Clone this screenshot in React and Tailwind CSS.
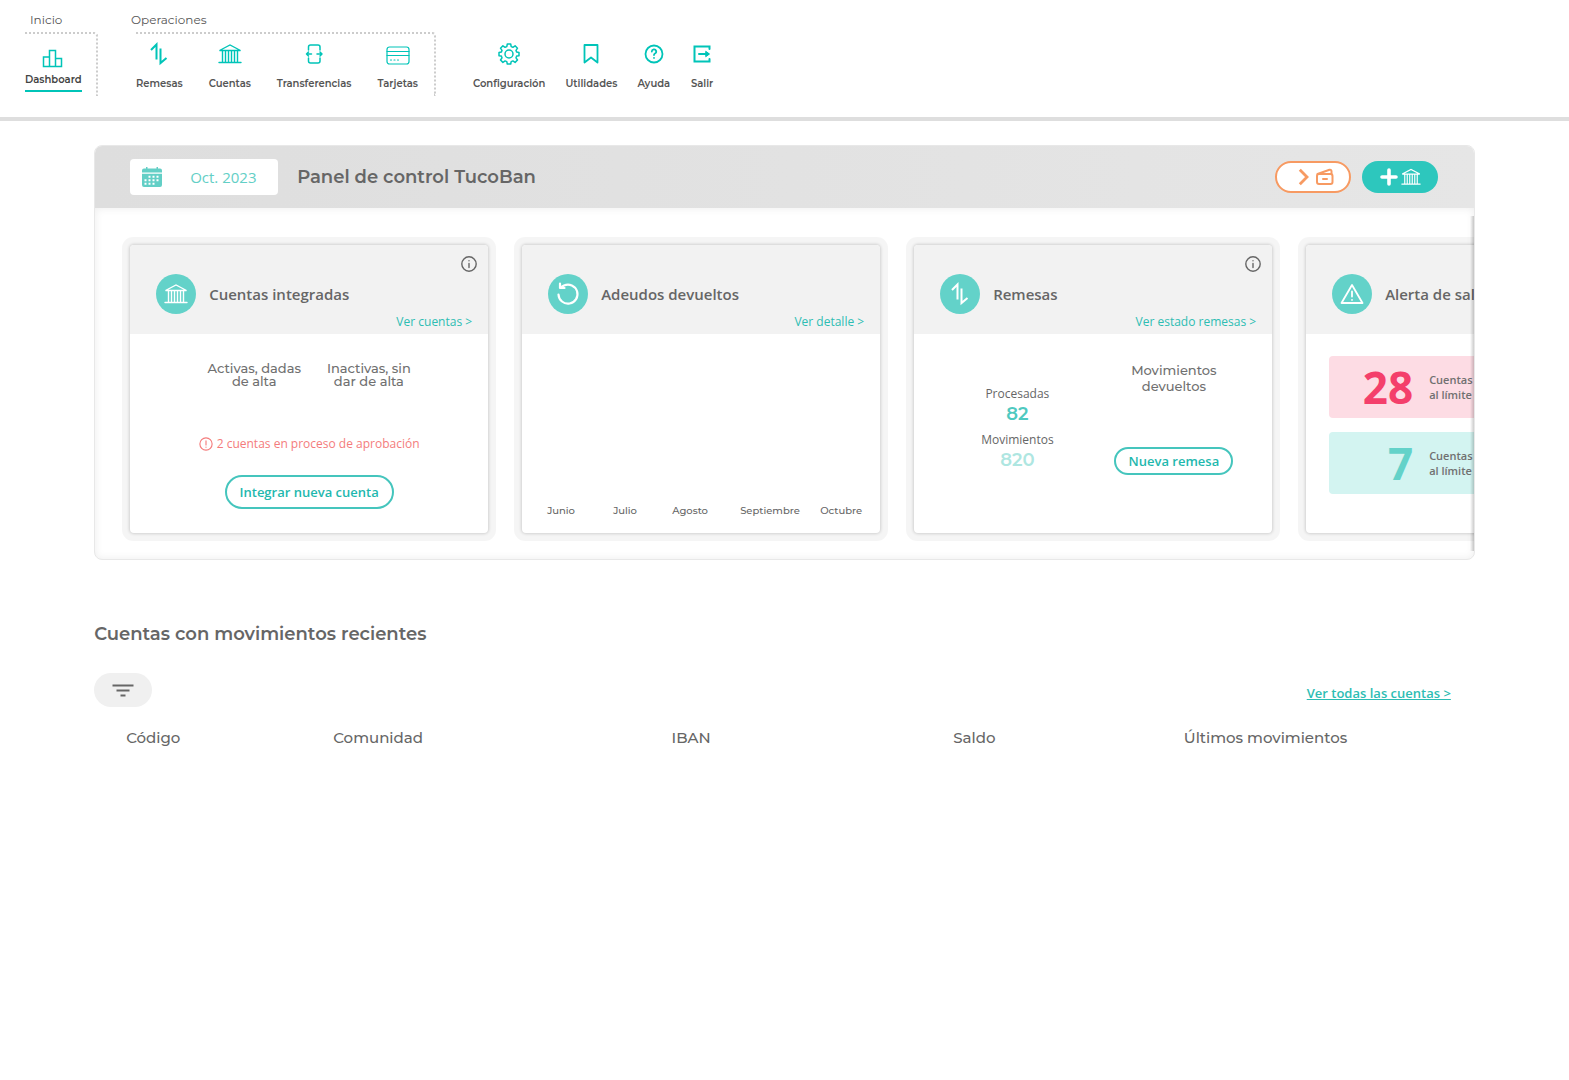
import React from "react";

const MONT = "font-['Montserrat','Inter',sans-serif]";
const OPEN = "font-['Open_Sans',sans-serif]";

function Svg({ children, className, box = 24, sw = 1.5 }) {
  return (
    <svg
      viewBox={`0 0 ${box} ${box}`}
      className={className}
      fill="none"
      stroke="currentColor"
      strokeWidth={sw}
      strokeLinecap="round"
      strokeLinejoin="round"
      aria-hidden="true"
    >
      {children}
    </svg>
  );
}

const Chart = () => (
  <Svg className="size-6">
    <path d="M2.500 11h6v9.500h-6zM8.500 4.500h6v16h-6zM14.500 12.500h6v8h-6z" strokeLinejoin="miter" />
  </Svg>
);

const Arrows = ({ className = "size-6", sw = 2 }) => (
  <Svg className={className} sw={sw}>
    <path d="M4 8L9.500 2.500V17.500M13.500 6.500V21L19.500 16" strokeLinecap="butt" strokeLinejoin="miter" />
  </Svg>
);

const Bank = ({ className = "size-6", sw = 1.4 }) => (
  <Svg className={className} sw={sw}>
    <path d="M1.500 8.500L12 3l10.500 5.500zM1 20.500h22M4.500 9v11M7.500 9v11M10.500 9v11M13.500 9v11M16.500 9v11M19.500 9v11" strokeLinejoin="miter" />
  </Svg>
);

const Transfer = () => (
  <Svg className="size-6">
    <path d="M6.500 8V5a2 2 0 0 1 2-2h7.500a2 2 0 0 1 2 2v3M6.500 16v3a2 2 0 0 0 2 2h7.500a2 2 0 0 0 2-2v-3M9.500 12H4.500M6.500 10l-2 2 2 2M15 12h5M18 10l2 2-2 2" />
  </Svg>
);

const Card = () => (
  <Svg className="size-6" sw={1.2}>
    <rect x="1" y="5" width="22" height="17" rx="2.500" />
    <path d="M1 9.500h22M1 13.500h22M4.500 18h1M8 18h1M11.500 18h1" />
  </Svg>
);

const Gear = () => (
  <Svg className="size-6">
    <circle cx="12" cy="12" r="4" />
    <path d="M10.300 2h3.400l.5 2.600 1.700.7 2.200-1.500 2.400 2.400-1.500 2.200.7 1.700 2.300.4v3.200l-2.300.4-.7 1.700 1.500 2.200-2.400 2.400-2.200-1.500-1.700.7-.5 2.400h-3.400l-.5-2.400-1.700-.7-2.200 1.500-2.400-2.400 1.500-2.200-.7-1.700-2.300-.4v-3.200l2.300-.4.7-1.700-1.500-2.200 2.400-2.400 2.200 1.500 1.700-.7z" />
  </Svg>
);

const Bookmark = () => (
  <Svg className="size-6" sw={1.8}>
    <path d="M5.500 3h13v17.500L12 15.500l-6.500 5z" />
  </Svg>
);

const Help = () => (
  <Svg className="size-6" sw={1.8}>
    <circle cx="12" cy="12" r="8.500" />
    <path d="M9.800 9.500a2.200 2.200 0 1 1 3.200 2c-.7.4-1 .8-1 1.500M12 15.800v.1" />
  </Svg>
);

const Exit = () => (
  <Svg className="size-6" sw={2}>
    <path d="M19.500 7V4.500h-15v15h15V17M9 12h9" strokeLinejoin="miter" />
    <path d="M16 9.500l3.500 2.500-3.500 2.500z" fill="currentColor" strokeWidth="1" />
  </Svg>
);

const Info = () => (
  <Svg className="size-4" box={16} sw={1.4}>
    <circle cx="8" cy="8" r="7.200" />
    <path d="M8 7.500v4M8 4.700v.1" />
  </Svg>
);

const Calendar = () => (
  <svg viewBox="0 0 20 20" className="size-5" fill="currentColor" aria-hidden="true">
    <path d="M4 0h1.500v1.500h9V0H16v1.500h2a2 2 0 0 1 2 2V5.500H0V3.500a2 2 0 0 1 2-2h2z" />
    <path
      fillRule="evenodd"
      d="M0 6.700h20V18a2 2 0 0 1-2 2H2a2 2 0 0 1-2-2zM6.500 8.700v2h2v-2zM10.500 8.700v2h2v-2zM14.500 8.700v2h2v-2zM2.500 12.200v2h2v-2zM6.500 12.200v2h2v-2zM10.500 12.200v2h2v-2zM14.500 12.200v2h2v-2zM2.500 15.700v2h2v-2zM6.500 15.700v2h2v-2zM10.500 15.700v2h2v-2z"
    />
  </svg>
);

function NavItem({ icon, label }) {
  return (
    <a href="#" className="flex flex-col items-center gap-2.5 pt-2 text-[#00c4b8]">
      {icon}
      <span className="text-[10px] leading-4 font-semibold text-[#555]">{label}</span>
    </a>
  );
}

function TopBar() {
  return (
    <header className={`${MONT} border-b-4 border-[#dedede]`}>
      <nav className="flex h-[117px] items-start pt-3 pl-[25px] text-xs leading-4 text-[#555]">
        <section className="mr-[33px]">
          <h2 className="pl-[5px]">Inicio</h2>
          <div className="mt-1 h-16 w-[73px] rounded-tr border-t-2 border-r-2 border-dotted border-[#ccc]">
            <a href="#" aria-current="page" className="inline-flex flex-col items-center gap-0.5 pt-3 text-[#00c4b8]">
              <Chart />
              <span className="border-b-2 border-[#00c4b8] pb-0.5 text-[10px] leading-4 font-semibold text-[#444]">
                Dashboard
              </span>
            </a>
          </div>
        </section>
        <section className="mr-[37px]">
          <h2>Operaciones</h2>
          <div className="mt-1 ml-[5px] flex h-16 gap-[26px] rounded-tr border-t-2 border-r-2 border-dotted border-[#ccc] pr-4">
            <NavItem icon={<Arrows />} label="Remesas" />
            <NavItem icon={<Bank />} label="Cuentas" />
            <NavItem icon={<Transfer />} label="Transferencias" />
            <NavItem icon={<Card />} label="Tarjetas" />
          </div>
        </section>
        <div className="flex gap-5 pt-[22px]">
          <NavItem icon={<Gear />} label="Configuración" />
          <NavItem icon={<Bookmark />} label="Utilidades" />
          <NavItem icon={<Help />} label="Ayuda" />
          <NavItem icon={<Exit />} label="Salir" />
        </div>
      </nav>
    </header>
  );
}

function PanelCard({ icon, title, link, info, children }) {
  return (
    <article className="flex h-72 w-[358px] shrink-0 flex-col rounded bg-white shadow-[0_0_3px_1px_rgba(0,0,0,0.15),0_0_0_8px_rgba(0,0,0,0.04)]">
      <header className="flex h-[89px] flex-col rounded-t bg-[#f2f2f2] text-[#666]">
        <div className="flex h-[29px] justify-end pt-[11px] pr-[11px]">
          {info && (
            <button type="button" aria-label={`Información de ${title}`} className="size-4">
              <Info />
            </button>
          )}
        </div>
        <div className="flex items-center gap-[13px] pl-[26px]">
          <span className="flex size-10 shrink-0 items-center justify-center rounded-full bg-[#63d2c9] text-white">
            {icon}
          </span>
          <h2 className="text-[15px] leading-5 font-semibold whitespace-nowrap">{title}</h2>
        </div>
        {link && (
          <a href="#" className="self-end pr-4 text-xs leading-4 text-[#2dbdb3]">
            {link}
          </a>
        )}
      </header>
      {children}
    </article>
  );
}

function Alert({ value, box, tone }) {
  return (
    <div className={`flex h-[62px] items-center rounded-sm ${box}`}>
      <strong className={`w-[84px] text-right text-[44px] leading-none font-bold ${tone}`}>{value}</strong>
      <p className="pl-4 text-[11px] leading-[15px] font-semibold text-[#707070]">
        Cuentas
        <br />
        al límite
      </p>
    </div>
  );
}

function ControlPanel() {
  return (
    <section className={`${OPEN} relative overflow-hidden rounded-lg border border-[#e8e8e8] bg-white`}>
      <div className="flex h-[62px] items-center bg-linear-to-r from-[#dedede] to-[#e6e6e6] pr-9 pl-[35px]">
        <button type="button" className="flex h-9 w-[148px] items-center gap-7 rounded bg-white pl-3 text-[#63cfc6]">
          <Calendar />
          <span className="text-[15px] leading-5 font-normal">Oct. 2023</span>
        </button>
        <h1 className={`${MONT} ml-[19px] text-lg leading-6 font-semibold text-[#666]`}>Panel de control TucoBan</h1>
        <button
          type="button"
          aria-label="Ver cartera"
          className="ml-auto flex h-8 w-[76px] items-center justify-center gap-1 rounded-full border-2 border-[#f79a62] bg-white pl-1 text-[#f79a62]"
        >
          <Svg className="h-5 w-4 shrink-0" box={20} sw={3.5}>
            <path d="M6 1l9 9-9 9" strokeLinecap="butt" strokeLinejoin="miter" />
          </Svg>
          <Svg className="size-5" box={20} sw={2}>
            <rect x="2" y="7" width="15.500" height="10" rx="2" />
            <path d="M2.500 7L14.500 2.800q2-.5 2 1.500v3M8 12h4" />
          </Svg>
        </button>
        <button
          type="button"
          aria-label="Añadir cuenta"
          className="ml-[11px] flex h-8 w-[76px] items-center justify-center gap-0.5 rounded-full bg-[#2dc7bd] text-white"
        >
          <Svg className="size-5" box={20} sw={3.6}>
            <path d="M10 3v14M3 10h14" />
          </Svg>
          <Bank className="size-5" sw={1.4} />
        </button>
      </div>

      <div className="flex gap-[34px] overflow-hidden pt-[37px] pb-[26px] pl-[35px] shadow-[inset_0_0_8px_rgba(0,0,0,0.08)]">
        <PanelCard icon={<Bank />} title="Cuentas integradas" link="Ver cuentas >" info>
          <div className="flex flex-1 flex-col items-center pt-7">
            <div className={`${MONT} flex gap-[26px] text-center text-[13px] leading-[13px] font-medium text-[#707070]`}>
              <p>
                Activas, dadas
                <br />
                de alta
              </p>
              <p>
                Inactivas, sin
                <br />
                dar de alta
              </p>
            </div>
            <p className="mt-12 flex items-center gap-1 text-xs leading-4 text-[#f47c7c]">
              <Svg className="size-3.5" box={16} sw={1.3}>
                <circle cx="8" cy="8" r="7" />
                <path d="M8 4.500v4.500M8 11.500v.1" />
              </Svg>
              2 cuentas en proceso de aprobación
            </p>
            <button
              type="button"
              className="mt-[23px] h-[34px] w-[169px] rounded-full border-2 border-[#45c5bd] text-[13px] leading-5 font-semibold text-[#1fb8ae]"
            >
              Integrar nueva cuenta
            </button>
          </div>
        </PanelCard>

        <PanelCard
          icon={
            <Svg className="size-6" sw={2.2}>
              <path d="M2.500 12.500A9.500 9.500 0 1 0 8 3.500L4.500 5.500M4 1.500v4.500h4.500" />
            </Svg>
          }
          title="Adeudos devueltos"
          link="Ver detalle >"
        >
          <ul className={`${MONT} mt-auto grid grid-cols-[66px_59px_68px_80px_auto] pb-3.5 pl-[25px] text-[10px] leading-4 font-medium text-[#666]`}>
            <li>Junio</li>
            <li>Julio</li>
            <li>Agosto</li>
            <li>Septiembre</li>
            <li>Octubre</li>
          </ul>
        </PanelCard>

        <PanelCard icon={<Arrows />} title="Remesas" link="Ver estado remesas >" info>
          <div className="grid grid-cols-2 pt-7 pr-5 pl-[25px] text-center text-[#666]">
            <dl className="pt-6">
              <dt className="text-xs leading-4">Procesadas</dt>
              <dd className={`${MONT} text-lg leading-6 font-semibold text-[#4fc9c0]`}>82</dd>
              <dt className="mt-1.5 text-xs leading-4">Movimientos</dt>
              <dd className={`${MONT} text-lg leading-6 font-semibold text-[#aee6e1]`}>820</dd>
            </dl>
            <div className="flex flex-col items-center">
              <p className={`${MONT} text-[13px] leading-4 font-medium text-[#707070]`}>
                Movimientos
                <br />
                devueltos
              </p>
              <button
                type="button"
                className="mt-[53px] h-7 w-[119px] rounded-full border-2 border-[#45c5bd] text-[13px] leading-4 font-semibold text-[#1fb8ae]"
              >
                Nueva remesa
              </button>
            </div>
          </div>
        </PanelCard>

        <PanelCard
          icon={
            <Svg className="size-6" sw={1.8}>
              <path d="M12 3L1.500 21h21zM12 9.500v5M12 17.800v.1" />
            </Svg>
          }
          title="Alerta de saldo"
        >
          <div className="flex flex-col gap-3.5 pt-[22px] pl-[23px]">
            <Alert value="28" box="bg-[#fddce4]" tone="text-[#f43f6b]" />
            <Alert value="7" box="bg-[#d3f4f1]" tone="text-[#63d2c9]" />
          </div>
        </PanelCard>
      </div>
      <span className="pointer-events-none absolute top-[70px] right-0 bottom-2 w-1 bg-linear-to-l from-black/20 to-transparent" />
    </section>
  );
}

function RecentAccounts() {
  return (
    <section className={`${MONT} pt-[60px] text-[#666]`}>
      <h2 className="text-lg leading-7 font-semibold">Cuentas con movimientos recientes</h2>
      <div className="mt-[25px] flex items-start justify-between pr-6">
        <button type="button" aria-label="Filtrar" className="flex h-[34px] w-[58px] items-center justify-center rounded-full bg-[#f0f0f0]">
          <Svg className="size-6" sw={2}>
            <path d="M1.500 7.500h21M5.500 12.500h13M9.500 17.500h5" strokeLinecap="butt" />
          </Svg>
        </button>
        <a href="#" className={`${OPEN} mt-2.5 text-[13px] leading-5 font-semibold text-[#2dbdb3] underline`}>
          Ver todas las cuentas &gt;
        </a>
      </div>
      <table className="mt-[19px] w-full table-fixed text-left text-[15px] leading-6">
        <thead>
          <tr>
            <th className="w-[15%] pl-8 font-medium">Código</th>
            <th className="w-[24.5%] pl-8 font-medium">Comunidad</th>
            <th className="w-[20.4%] pl-8 font-medium">IBAN</th>
            <th className="w-[16.7%] pl-8 font-medium">Saldo</th>
            <th className="pl-8 font-medium">Últimos movimientos</th>
          </tr>
        </thead>
      </table>
    </section>
  );
}

export default function App() {
  return (
    <div className="min-h-screen bg-white">
      <TopBar />
      <main className="px-[6%] pt-6">
        <ControlPanel />
        <RecentAccounts />
      </main>
    </div>
  );
}
